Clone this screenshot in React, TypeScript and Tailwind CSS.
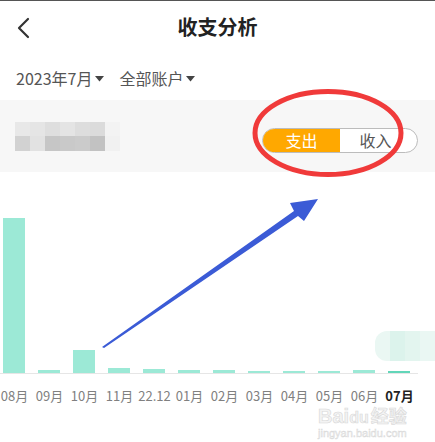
import React from "react";

const font = { fontFamily: '"Noto Sans CJK SC", "Noto Sans", sans-serif' };

const months = [
  { label: "08月", h: 155 },
  { label: "09月", h: 3 },
  { label: "10月", h: 23 },
  { label: "11月", h: 5 },
  { label: "22.12", h: 4 },
  { label: "01月", h: 3 },
  { label: "02月", h: 3 },
  { label: "03月", h: 2 },
  { label: "04月", h: 2 },
  { label: "05月", h: 2 },
  { label: "06月", h: 3 },
  { label: "07月", h: 2, active: true },
];

const topCells = ["#e8e8e8", "#e5e5e5", "#dedede", "#e4e4e4", "#dddddd", "#dbdbdb", "#f3f3f3"];
const botCells = ["#d2d2d2", "#e2e2e2", "#c6c6c6", "#c9c9c9", "#cbcbcb", "#c2c2c2", "#f1f1f1"];

function Caret() {
  return (
    <svg width="9" height="6" viewBox="0 0 9 6" className="ml-[3px] mt-[1px]">
      <path d="M0 0 L9 0 L4.5 5.5 Z" fill="#444" />
    </svg>
  );
}

export default function App() {
  return (
    <div className="relative w-[435px] h-[442px] bg-white overflow-hidden" style={font}>
      <div className="h-px bg-[#555]" />
      {/* Header */}
      <div className="relative h-[55px] flex items-center justify-center">
        <svg className="absolute left-[16px] top-[16px]" width="14" height="22" viewBox="0 0 14 22">
          <path d="M12 2 L3 11 L12 20" fill="none" stroke="#333" strokeWidth="2.2" strokeLinecap="round" strokeLinejoin="round" />
        </svg>
        <span className="text-[20px] font-bold text-[#222] leading-none mt-[-3px]">收支分析</span>
      </div>
      {/* Filter row */}
      <div className="h-[44px] flex items-center pl-[16px] text-[16px] text-[#555]">
        <span className="flex items-center">2023年7月<Caret /></span>
        <span className="flex items-center ml-[15px]">全部账户<Caret /></span>
      </div>
      {/* Gray band */}
      <div className="h-[72px] bg-[#f7f7f7] flex items-center pl-[15px] pr-[17px]">
        <div className="flex flex-col">
          <div className="flex">
            {topCells.map((c, i) => (
              <div key={i} className="w-[15px] h-[14px]" style={{ background: c }} />
            ))}
          </div>
          <div className="flex">
            {botCells.map((c, i) => (
              <div key={i} className="w-[15px] h-[15px]" style={{ background: c }} />
            ))}
          </div>
        </div>
        <div className="ml-auto mt-[8px] flex h-[25px] w-[156px] rounded-full border border-[#bcbcbc] overflow-hidden bg-white text-[16px]">
          <div className="w-[77px] bg-[#ffa800] text-white flex items-center justify-center">支出</div>
          <div className="flex-1 text-[#555] flex items-center justify-center pr-[6px]">收入</div>
        </div>
      </div>
      {/* Chart */}
      <div className="relative h-[200px] pt-[45px]">
        <div className="relative flex items-end h-[156px] ml-[3px] gap-[13px]">
          {months.map((m, i) => (
            <div
              key={i}
              className={m.active ? "w-[22px] bg-[#62d6b9]" : "w-[22px] bg-[#9ce9d6]"}
              style={{ height: m.h }}
            />
          ))}
        </div>
        <div className="h-px bg-[#e6e6e6] w-[418px]" />
        <div className="flex ml-[-3px] mt-[15px] text-[13px] leading-none">
          {months.map((m, i) => (
            <div
              key={i}
              className={m.active ? "w-[35px] text-center text-[#222] font-bold" : "w-[35px] text-center text-[#808080]"}
            >
              {m.label}
            </div>
          ))}
        </div>
      </div>
      {/* Blurred tooltip */}
      <div className="absolute left-[375px] top-[331px] w-[70px] h-[30px] rounded-l-[12px] flex">
        <div className="w-[15px] h-full bg-[#eaf7f3] rounded-l-[12px]" />
        <div className="w-[15px] h-full bg-[#dcf3ec]" />
        <div className="w-[15px] h-full bg-[#e3f5ef]" />
        <div className="w-[25px] h-full bg-[#eaf7f3]" />
      </div>
      {/* Watermark */}
      <div className="absolute left-[318px] top-[406px] text-[20px] font-bold text-[#f3f3f3] leading-none" style={{ fontFamily: '"Liberation Sans", sans-serif', WebkitTextStroke: "0.6px #d8d8d8" }}>
        Bai<span className="text-[16px]">du</span>
        <span className="text-[18px] ml-[2px]" style={font}>经验</span>
      </div>
      <div className="absolute left-[318px] top-[428px] text-[11px] text-[#ededed] leading-none" style={{ fontFamily: '"Liberation Sans", sans-serif', WebkitTextStroke: "0.4px #d8d8d8" }}>
        jingyan.baidu.com
      </div>
      {/* Annotations */}
      <svg className="absolute left-0 top-0 pointer-events-none" width="435" height="442" viewBox="0 0 435 442">
        <ellipse cx="328" cy="133" rx="73" ry="41.5" fill="none" stroke="#f03a3a" strokeWidth="5" />
        <polygon points="102,347 294,211 290,203 318,199 304,221 298,216 104,348" fill="#3b5bd6" />
      </svg>
    </div>
  );
}
